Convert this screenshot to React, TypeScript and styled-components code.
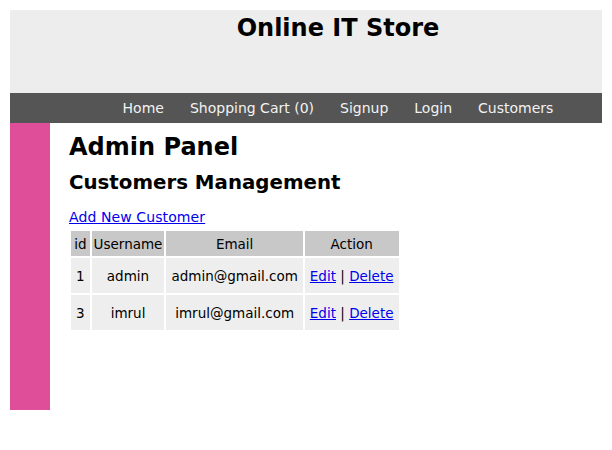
import React from "react";
import styled, { createGlobalStyle } from "styled-components";

const Global = createGlobalStyle`
  body {
    margin: 10px;
    background: #fff;
    font-family: "DejaVu Sans", Verdana, sans-serif;
    color: #000;
  }
`;

const Header = styled.header`
  background: #ededed;
  height: 83px;
  padding-left: 64px;
  display: flex;
  justify-content: center;
  align-items: flex-start;
`;

const Title = styled.h1`
  margin: 0;
  padding-top: 4px;
  font-size: 24px;
  font-weight: bold;
`;

const Nav = styled.nav`
  background: #555555;
  height: 30px;
  padding-left: 64px;
  display: flex;
  justify-content: center;
  align-items: center;
  gap: 26px;
`;

const NavLink = styled.a`
  color: #f2f2f2;
  font-size: 14px;
  text-decoration: none;
`;

const Body = styled.div`
  display: flex;
  min-height: 287px;
`;

const Sidebar = styled.aside`
  width: 40px;
  flex: none;
  background: #df4f99;
`;

const Main = styled.main`
  padding-left: 19px;
  padding-top: 9px;
`;

const H1 = styled.h1`
  margin: 0;
  font-size: 24px;
  line-height: 30px;
  font-weight: bold;
`;

const H2 = styled.h2`
  margin: 8px 0 0;
  font-size: 19.8px;
  line-height: 25px;
  font-weight: bold;
`;

const AddLink = styled.a`
  display: inline-block;
  margin-top: 14px;
  color: #0000ee;
  font-size: 14px;
  letter-spacing: 0.1px;
  text-decoration: underline;
`;

const Table = styled.table`
  margin-top: 3px;
  border-spacing: 2px;
  font-size: 13.5px;
`;

const Th = styled.th`
  background: #c8c8c8;
  font-weight: normal;
  height: 25px;
  padding: 0 2px;
  text-align: center;
`;

const Td = styled.td`
  background: #eeeeee;
  height: 35px;
  padding: 0 5px;
  text-align: center;
`;

const ActionLink = styled.a`
  color: #0000ee;
  text-decoration: underline;
`;

const rows = [
  { id: 1, user: "admin", email: "admin@gmail.com" },
  { id: 3, user: "imrul", email: "imrul@gmail.com" },
];

export default function App() {
  return (
    <>
      <Global />
      <Header>
        <Title>Online IT Store</Title>
      </Header>
      <Nav>
        <NavLink>Home</NavLink>
        <NavLink>Shopping Cart (0)</NavLink>
        <NavLink>Signup</NavLink>
        <NavLink>Login</NavLink>
        <NavLink>Customers</NavLink>
      </Nav>
      <Body>
        <Sidebar />
        <Main>
          <H1>Admin Panel</H1>
          <H2>Customers Management</H2>
          <AddLink href="#">Add New Customer</AddLink>
          <Table>
            <thead>
              <tr>
                <Th>id</Th>
                <Th>Username</Th>
                <Th>Email</Th>
                <Th>Action</Th>
              </tr>
            </thead>
            <tbody>
              {rows.map((r) => (
                <tr key={r.id}>
                  <Td>{r.id}</Td>
                  <Td>{r.user}</Td>
                  <Td>{r.email}</Td>
                  <Td>
                    <ActionLink href="#">Edit</ActionLink> | <ActionLink href="#">Delete</ActionLink>
                  </Td>
                </tr>
              ))}
            </tbody>
          </Table>
        </Main>
      </Body>
    </>
  );
}
